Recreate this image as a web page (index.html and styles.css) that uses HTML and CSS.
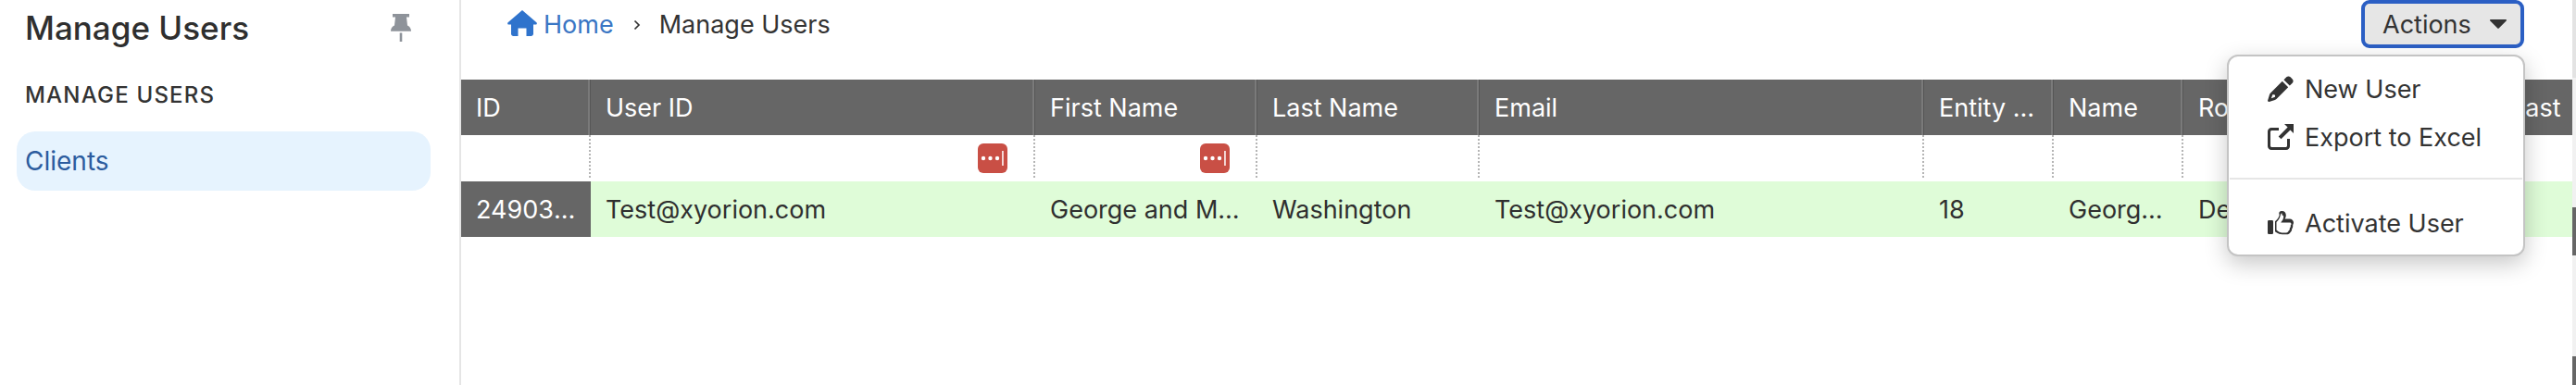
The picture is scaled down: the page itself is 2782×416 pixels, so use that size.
FILE: index.html
```html
<!DOCTYPE html>
<html lang="en">
<head>
  <meta charset="UTF-8">
  <title>Manage Users</title>
  <link rel="stylesheet" href="styles.css">
</head>
<body>
  <aside class="sidebar">
    <div class="sidebar-head">
      <h1>Manage Users</h1>
      <svg class="pin" viewBox="0 0 22 30"><path d="M2 0h18v3.400h-3l1 9.200c2.600 1.300 4 3.300 4 6.100H0c0-2.800 1.400-4.800 4-6.100L5 3.400H2zM9.700 20.500h2.600V30H9.700z"/></svg>
    </div>
    <h2>MANAGE USERS</h2>
    <a class="side-link">Clients</a>
  </aside>

  <main class="content">
    <div class="topbar">
      <nav class="crumbs">
        <svg class="home" viewBox="0 0 32 28"><path d="M16 0l15.400 13.200c.9.800.4 2.300-.8 2.300H28v10c0 1.400-1.100 2.500-2.500 2.500H20.500v-8.500h-9V28H6.500C5.100 28 4 26.900 4 25.500v-10H1.400c-1.200 0-1.700-1.500-.8-2.300z"/></svg>
        <a class="crumb-link">Home</a>
        <svg class="chev" viewBox="0 0 8 12"><path d="M1.500 1.500L6 6l-4.500 4.500" fill="none" stroke="#333" stroke-width="1.700"/></svg>
        <span>Manage Users</span>
      </nav>
      <button class="actions-btn">Actions <svg class="caret" viewBox="0 0 18 10"><path d="M1 0h16c.9 0 1.300 1 .7 1.600L9.700 9.600c-.4.400-1 .4-1.400 0L.3 1.600C-.3 1 .1 0 1 0z"/></svg></button>
    </div>

    <table class="grid">
      <colgroup>
        <col class="c-id"><col class="c-user"><col class="c-first"><col class="c-last"><col class="c-email"><col class="c-entity"><col class="c-name"><col class="c-role"><col class="c-end">
      </colgroup>
      <thead>
        <tr>
          <th>ID</th>
          <th>User ID</th>
          <th>First Name</th>
          <th>Last Name</th>
          <th>Email</th>
          <th>Entity Number</th>
          <th>Name</th>
          <th>Role</th>
          <th>Last</th>
        </tr>
      </thead>
      <tbody>
        <tr class="filters">
          <td></td>
          <td><div class="filter-cell"><span class="more-btn"><svg viewBox="0 0 32 32"><circle cx="6" cy="16" r="2.200"/><circle cx="13.500" cy="16" r="2.200"/><circle cx="21" cy="16" r="2.200"/><rect x="26.200" y="8" width="1.500" height="16"/></svg></span></div></td>
          <td><div class="filter-cell"><span class="more-btn"><svg viewBox="0 0 32 32"><circle cx="6" cy="16" r="2.200"/><circle cx="13.500" cy="16" r="2.200"/><circle cx="21" cy="16" r="2.200"/><rect x="26.200" y="8" width="1.500" height="16"/></svg></span></div></td>
          <td></td>
          <td></td>
          <td></td>
          <td></td>
          <td></td>
          <td></td>
        </tr>
        <tr class="row-active">
          <td class="frozen">249038172</td>
          <td>Test@xyorion.com</td>
          <td>George and Martha</td>
          <td>Washington</td>
          <td>Test@xyorion.com</td>
          <td>18</td>
          <td>George Washington</td>
          <td>Default</td>
          <td></td>
        </tr>
      </tbody>
    </table>

    <div class="menu">
      <a class="menu-item">
        <svg viewBox="0 0 28 28"><path d="M20.300 1.300c1.200-1.200 3.100-1.200 4.300 0l2.100 2.100c1.200 1.200 1.200 3.100 0 4.300l-2.900 2.900-6.400-6.400zM15.800 5.800l6.400 6.400L9.500 24.900c-.5.500-1 .8-1.600 1L1.600 27.900c-.9.300-1.800-.6-1.500-1.500l2-6.300c.2-.6.500-1.200 1-1.600zM5.300 20.200l-1.400 4 4-1.400.2-1.800-1-.8z"/></svg>
        New User
      </a>
      <a class="menu-item">
        <svg viewBox="0 0 28 28"><path d="M18 0h10v10l-3.600-3.600-9.900 9.900-2.800-2.800 9.900-9.900zM4 4h8v3H4.500C3.700 7 3 7.700 3 8.500v15c0 .8.700 1.500 1.500 1.500h15c.8 0 1.500-.7 1.500-1.500V16h3v8c0 2.200-1.800 4-4 4H4c-2.200 0-4-1.800-4-4V8c0-2.200 1.800-4 4-4z"/></svg>
        Export to Excel
      </a>
      <div class="menu-sep"></div>
      <a class="menu-item">
        <svg viewBox="0 0 28 26"><rect x="0" y="10" width="6" height="15" rx="1.200"/><path fill-rule="evenodd" d="M15.500 0c2.700 0 4.300 2 4.300 4.400 0 1.500-.5 2.900-1.300 4.100h5.300c2.300 0 4.200 1.800 4.200 4 0 .9-.3 1.700-.8 2.400.2 2-.2 3.300-1 4.300 0 1.600-.6 2.900-1.600 3.700-.8 1.400-2.300 2.300-4.300 2.300h-4.600c-2.300 0-4.300-.7-6.200-2l-1.500-1V10.900l.8-.5c2.200-1.800 3.400-4 3.900-6.500C11.600 1.500 13.200 0 15.500 0zm0 2.600c-.9 0-1.400.6-1.600 1.700-.6 3-2 5.600-4.400 7.800v8.400c1.700 1.200 3.400 2.900 5.700 2.900H20c1.600 0 2.200-1 2.500-1.900.9-.5 1.500-1.500 1.300-3 .8-.7 1.300-1.900.9-3 .5-.4.800-1 .8-1.600 0-.9-.7-1.500-1.600-1.500H14.200c1.300-1.700 3-3.500 3-6.100 0-1-.6-1.700-1.700-1.700z"/></svg>
        Activate User
      </a>
    </div>
  </main>

  <div class="edge">
    <div class="edge-top"></div>
    <div class="edge-thumb"></div>
    <div class="edge-thumb edge-thumb-low"></div>
  </div>
</body>
</html>
```

FILE: styles.css
```css
* {
  box-sizing: border-box;
}

body {
  margin: 0;
  height: 416px;
  display: flex;
  overflow: hidden;
  font-family: Inter, "Liberation Sans", sans-serif;
  font-size: 27px;
  color: #333;
  background-color: #fff;
}

/* Sidebar */
.sidebar {
  width: 498px;
  flex: none;
  padding: 0 31px 0 18px;
  border-right: 2px solid #e5e5e5;
}

.sidebar-head {
  height: 60px;
  padding: 0 21px 0 9px;
  display: flex;
  align-items: center;
  justify-content: space-between;
}

.sidebar-head h1 {
  margin: 0;
  font-size: 35px;
  font-weight: 500;
  color: #2f2f2f;
}

.pin {
  width: 22px;
  height: 30px;
  fill: #8e939a;
}

.sidebar h2 {
  margin: 28px 0 0 9px;
  height: 29px;
  line-height: 29px;
  font-size: 24px;
  font-weight: 500;
  letter-spacing: 1.2px;
  color: #333;
}

.side-link {
  display: block;
  margin-top: 25px;
  height: 64px;
  padding-left: 9px;
  line-height: 64px;
  font-size: 28px;
  color: #2c5c9e;
  background-color: #e6f3fe;
  border-radius: 20px;
}

/* Top bar */
.content {
  position: relative;
  flex: 1;
  min-width: 0;
}

.topbar {
  height: 86px;
  padding-right: 52px;
  display: flex;
  align-items: flex-start;
  justify-content: space-between;
}

.crumbs {
  height: 52px;
  padding: 0 0 0 50px;
  display: flex;
  align-items: center;
  color: #333;
}

.home {
  width: 32px;
  height: 28px;
  margin-right: 7px;
  margin-top: -2px;
  fill: #2f73cc;
}

.crumb-link {
  color: #3a76c4;
}

.chev {
  width: 8px;
  height: 12px;
  margin: 2px 20px 0 21px;
}

.actions-btn {
  width: 176px;
  height: 52px;
  padding: 0 0 0 19px;
  display: flex;
  align-items: center;
  font-family: inherit;
  font-size: 27px;
  color: #333;
  background-color: #e6e6e6;
  border: 4px solid #2b5fc4;
  border-radius: 9px;
  white-space: pre;
}

.caret {
  width: 18px;
  height: 10px;
  margin-left: 13px;
  fill: #333;
}

/* Table */
.grid {
  width: 2280px;
  table-layout: fixed;
  border-collapse: separate;
  border-spacing: 0;
}

.c-id { width: 140px; }
.c-user { width: 480px; }
.c-first { width: 240px; }
.c-last { width: 240px; }
.c-email { width: 480px; }
.c-entity { width: 140px; }
.c-name { width: 140px; }
.c-role { width: 338px; }
.c-end { width: 82px; }

.grid th,
.grid td {
  padding: 0 14px 0 16px;
  text-align: left;
  font-weight: 400;
  white-space: nowrap;
  overflow: hidden;
  text-overflow: ellipsis;
}

.grid th {
  height: 60px;
  color: #fff;
  background-color: #666;
  box-shadow: inset -1px 0 #565656, inset -3px 0 #7a7a7a;
}

.grid th:last-child {
  padding-right: 0;
  box-shadow: none;
}

.grid .filters td {
  height: 50px;
  padding: 0 0 4px 0;
  vertical-align: top;
  background-image: linear-gradient(#b5b5b5 50%, transparent 50%);
  background-size: 2px 4px;
  background-repeat: repeat-y;
  background-position: right top;
  background-clip: content-box;
}

.grid .filters td:last-child {
  background-image: none;
}

.filter-cell {
  height: 46px;
  padding: 9px 30px 0 0;
  display: flex;
  justify-content: flex-end;
}

.more-btn {
  width: 32px;
  height: 32px;
  background-color: #c94f45;
  border-radius: 6px;
}

.more-btn svg {
  display: block;
  fill: #fff;
}

.row-active td {
  height: 60px;
  background-color: #dffcd8;
  color: #2f2f2f;
}

.grid .row-active .frozen {
  padding-right: 8px;
  color: #fff;
  background-color: #666;
}

/* Actions menu */
.menu {
  position: absolute;
  top: 59px;
  left: 1907px;
  width: 322px;
  height: 218px;
  padding-top: 9px;
  background-color: #fff;
  border: 2px solid #c4c4c4;
  border-radius: 12px;
  box-shadow: 0 8px 24px rgba(0, 0, 0, 0.22);
}

.menu-item {
  height: 52px;
  padding-left: 42px;
  display: flex;
  align-items: center;
  color: #333;
}

.menu-item svg {
  width: 28px;
  height: 28px;
  margin-right: 12px;
  fill: #333;
}

.menu-sep {
  height: 2px;
  margin: 18px 1px 21px;
  background-color: #e6e6e6;
}

/* Right edge */
.edge {
  width: 4px;
  flex: none;
  background-color: #f1f1f1;
}

.edge-top {
  height: 84px;
  margin-bottom: 140px;
  background-color: #e3e3e3;
}

.edge-thumb {
  height: 52px;
  background-color: #666;
}

.edge-thumb-low {
  height: 31px;
  margin-top: 109px;
}
```
